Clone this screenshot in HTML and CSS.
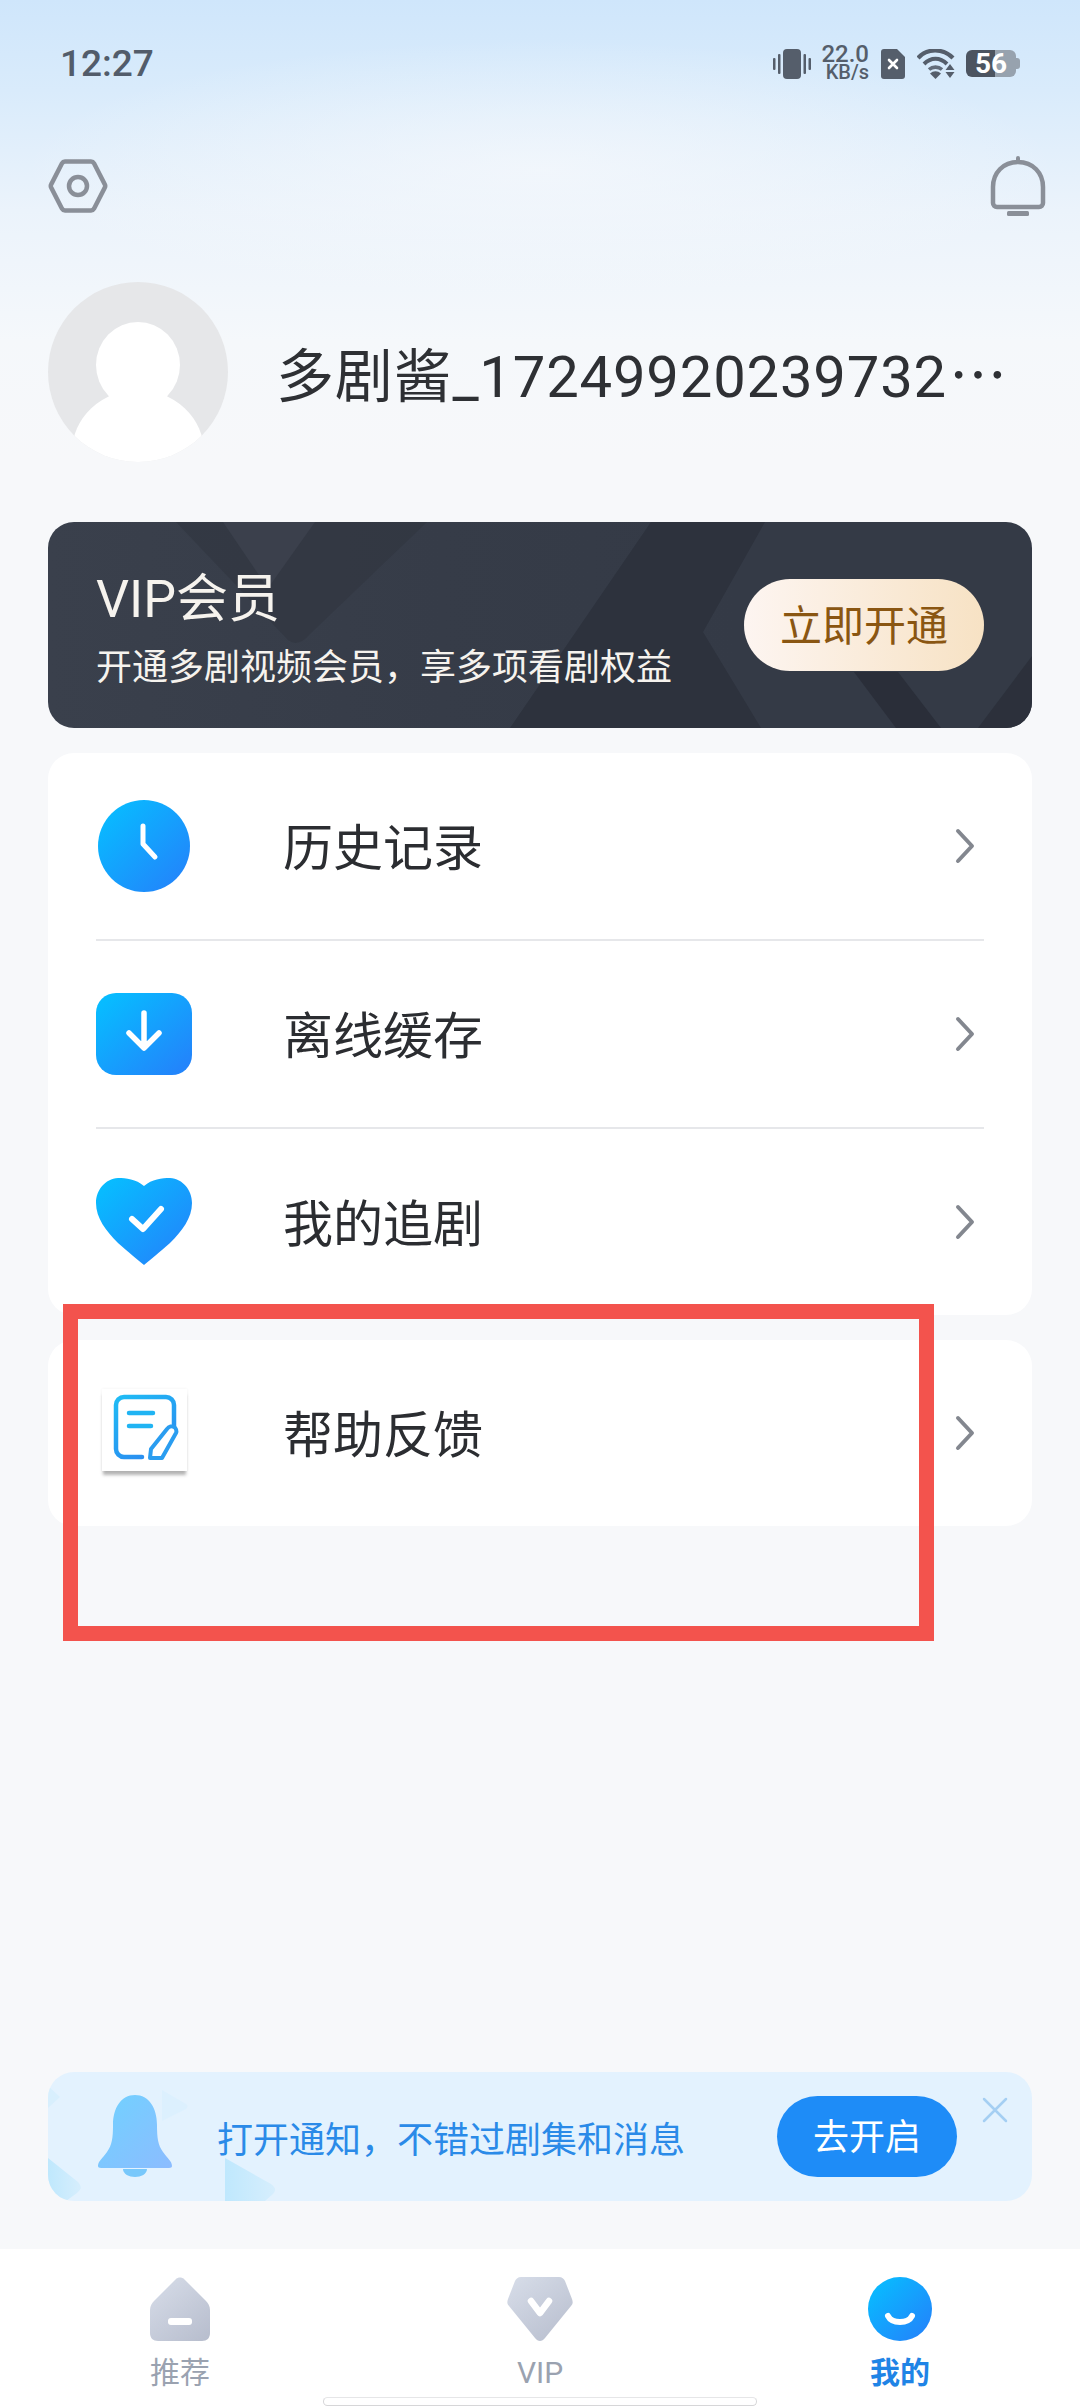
FILE: index.html
```html
<!DOCTYPE html>
<html lang="zh-CN">
<head>
    <meta charset="UTF-8">
    <meta name="viewport" content="width=device-width, initial-scale=1.0">
    <title>我的</title>
    <link rel="stylesheet" href="styles.css">
</head>
<body>
<svg class="defs" width="0" height="0">
    <defs>
        <linearGradient id="blue" x1="0.1" y1="0.1" x2="0.9" y2="0.9">
            <stop offset="0" stop-color="#08bbff"/>
            <stop offset="1" stop-color="#2285fb"/>
        </linearGradient>
        <linearGradient id="grey" x1="0.1" y1="0" x2="0.9" y2="1">
            <stop offset="0" stop-color="#d6dce8"/>
            <stop offset="1" stop-color="#b8bece"/>
        </linearGradient>
        <linearGradient id="bellfill" x1="0" y1="0" x2="1" y2="1">
            <stop offset="0" stop-color="#70d2ff"/>
            <stop offset="1" stop-color="#8cbcff"/>
        </linearGradient>
        <linearGradient id="pen" x1="0" y1="0" x2="0.6" y2="1">
            <stop offset="0" stop-color="#1fbcf5"/>
            <stop offset="1" stop-color="#2a8df0"/>
        </linearGradient>
        <linearGradient id="notice-shape" x1="0" y1="0" x2="1" y2="0">
            <stop offset="0" stop-color="#bfe8fd"/>
            <stop offset="1" stop-color="#d6eefd"/>
        </linearGradient>
    </defs>
</svg>

<div class="page">
    <!-- Status bar -->
    <div class="status-bar">
        <span class="time">12:27</span>
        <div class="status-icons">
            <svg class="ic-vibrate" width="38" height="30" viewBox="0 0 38 30">
                <rect x="10" y="0" width="18" height="30" rx="4" fill="#555e6b"/>
                <rect x="0" y="9" width="2.5" height="12" rx="1" fill="#555e6b"/>
                <rect x="5" y="5" width="2.5" height="20" rx="1" fill="#555e6b"/>
                <rect x="30.5" y="5" width="2.5" height="20" rx="1" fill="#555e6b"/>
                <rect x="35.5" y="9" width="2.5" height="12" rx="1" fill="#555e6b"/>
            </svg>
            <div class="net-speed">
                <span class="net-num">22.0</span>
                <span class="net-unit">KB/s</span>
            </div>
            <svg width="24" height="30" viewBox="0 0 24 30">
                <path d="M3 0h13l8 8v19a3 3 0 0 1-3 3H3a3 3 0 0 1-3-3V3a3 3 0 0 1 3-3z" fill="#555e6b"/>
                <path d="M8 11l8 8M16 11l-8 8" stroke="#fff" stroke-width="2.6" stroke-linecap="round"/>
            </svg>
            <svg width="38" height="30" viewBox="0 0 38 30">
                <path d="M1 9C10 -1 26 -1 36 9" fill="none" stroke="#555e6b" stroke-width="4.2"/>
                <path d="M7 15C14 8 23 8 30 15" fill="none" stroke="#555e6b" stroke-width="4"/>
                <path d="M12 20.5a10 10 0 0 1 13 0" fill="none" stroke="#555e6b" stroke-width="3.6" opacity="0.9"/>
                <path d="M13 24.5a8 8 0 0 1 11 0L18.500 30z" fill="#555e6b"/>
                <path d="M33 15l4.500 6h-9zM28.500 23h9L33 29z" fill="#555e6b"/>
            </svg>
            <div class="battery">
                <span class="battery-num">56</span>
                <span class="battery-cap"></span>
            </div>
        </div>
    </div>

    <!-- Top actions -->
    <div class="top-bar">
        <svg width="60" height="56" viewBox="0 0 60 56">
            <path d="M17 3.500h26a3.500 3.500 0 0 1 3 1.800l10.500 20.500a4 4 0 0 1 0 4.400L46 50.700a3.500 3.500 0 0 1-3 1.800H17a3.500 3.500 0 0 1-3-1.800L3.500 30.200a4 4 0 0 1 0-4.400L14 5.300a3.500 3.500 0 0 1 3-1.800z" fill="none" stroke="#8a8f98" stroke-width="4.500"/>
            <circle cx="30" cy="28" r="9" fill="none" stroke="#8a8f98" stroke-width="4.500"/>
        </svg>
        <svg width="56" height="62" viewBox="0 0 56 62">
            <path d="M28 7C13 7 3 18 3 32v16a4 4 0 0 0 4 4h42a4 4 0 0 0 4-4V32C53 18 43 7 28 7z" fill="none" stroke="#8a8f98" stroke-width="4.500"/>
            <rect x="26" y="1" width="4" height="7" rx="2" fill="#8a8f98"/>
            <rect x="17" y="56" width="22" height="5" rx="1.500" fill="#8a8f98"/>
        </svg>
    </div>

    <!-- Profile -->
    <div class="profile">
        <svg class="avatar" width="180" height="180" viewBox="0 0 180 180">
            <circle cx="90" cy="90" r="90" fill="#e6e7e9"/>
            <clipPath id="avatar-clip"><circle cx="90" cy="90" r="90"/></clipPath>
            <g clip-path="url(#avatar-clip)">
                <ellipse cx="90" cy="83" rx="42" ry="43" fill="#fff"/>
                <ellipse cx="90" cy="170" rx="66" ry="62" fill="#fff"/>
                <path d="M62 110h56l8 30H54z" fill="#fff"/>
            </g>
        </svg>
        <div class="nickname">多剧酱_17249920239732<span class="nickname-dots">…</span></div>
    </div>

    <!-- VIP card -->
    <div class="vip-card">
        <svg class="vip-bg" width="984" height="206" viewBox="0 0 984 206">
            <path d="M128 0L240 118Q250 126 262 112L379 0z" fill="#30353f" opacity="0.6"/>
            <path d="M175 0h92l-44 62q-3 4-6 0z" fill="#3b404c"/>
            <path d="M603 0L462 206H713L655 110 717 0z" fill="#2d323d"/>
            <path d="M806 150L848 206H893L850 150z" fill="#2a2e39"/>
            <path d="M984 134L930 206H984z" fill="#2c303b"/>
        </svg>
        <div class="vip-text">
            <div class="vip-title">VIP会员</div>
            <div class="vip-desc">开通多剧视频会员，享多项看剧权益</div>
        </div>
        <div class="vip-btn">立即开通</div>
    </div>

    <!-- Menu -->
    <div class="menu-card">
        <div class="menu-row">
            <div class="menu-icon">
                <svg width="96" height="96" viewBox="0 0 96 96">
                    <circle cx="48" cy="48" r="46" fill="url(#blue)"/>
                    <path d="M47 28v18l12 13" fill="none" stroke="#fff" stroke-width="5" stroke-linecap="round" stroke-linejoin="round"/>
                </svg>
            </div>
            <span class="menu-label">历史记录</span>
            <svg class="chevron" width="20" height="36" viewBox="0 0 20 36"><path d="M3 3l14 15L3 33" fill="none" stroke="#83878f" stroke-width="4" stroke-linecap="round" stroke-linejoin="round"/></svg>
        </div>
        <div class="divider"></div>
        <div class="menu-row">
            <div class="menu-icon">
                <svg width="96" height="82" viewBox="0 0 96 82">
                    <rect width="96" height="82" rx="20" fill="url(#blue)"/>
                    <path d="M48 20v34M33 40l15 15 15-15" fill="none" stroke="#fff" stroke-width="5.500" stroke-linecap="round" stroke-linejoin="round"/>
                </svg>
            </div>
            <span class="menu-label">离线缓存</span>
            <svg class="chevron" width="20" height="36" viewBox="0 0 20 36"><path d="M3 3l14 15L3 33" fill="none" stroke="#83878f" stroke-width="4" stroke-linecap="round" stroke-linejoin="round"/></svg>
        </div>
        <div class="divider"></div>
        <div class="menu-row">
            <div class="menu-icon">
                <svg width="96" height="88" viewBox="0 0 96 88">
                    <path d="M48 8C40 1 30 0 22 0 9 1 0 12 0 25c0 15 10 28 22 40 10 9 20 17 26 22 6-5 16-13 26-22 12-12 22-25 22-40C96 12 87 1 74 0c-8 0-18 1-26 8z" fill="url(#blue)"/>
                    <path d="M36 41l11 10 18-20" fill="none" stroke="#fff" stroke-width="6" stroke-linecap="round" stroke-linejoin="round"/>
                </svg>
            </div>
            <span class="menu-label">我的追剧</span>
            <svg class="chevron" width="20" height="36" viewBox="0 0 20 36"><path d="M3 3l14 15L3 33" fill="none" stroke="#83878f" stroke-width="4" stroke-linecap="round" stroke-linejoin="round"/></svg>
        </div>
    </div>

    <div class="menu-card">
        <div class="menu-row">
            <div class="menu-icon">
                <div class="help-tile">
                    <svg width="70" height="68" viewBox="0 0 70 68">
                        <path d="M29 63H11a8 8 0 0 1-8-8V11a8 8 0 0 1 8-8h42a8 8 0 0 1 8 8v23" fill="none" stroke="url(#pen)" stroke-width="4.500" stroke-linecap="round"/>
                        <path d="M16 19h24M16 32h22" stroke="#20b4f3" stroke-width="4.500" stroke-linecap="round"/>
                        <path d="M37 64l1-9 16-20c2-3 5-3 7-2s3 4 2 6L49 64z" fill="#fff" stroke="#2a9df0" stroke-width="4" stroke-linejoin="round"/>
                    </svg>
                </div>
            </div>
            <span class="menu-label">帮助反馈</span>
            <svg class="chevron" width="20" height="36" viewBox="0 0 20 36"><path d="M3 3l14 15L3 33" fill="none" stroke="#83878f" stroke-width="4" stroke-linecap="round" stroke-linejoin="round"/></svg>
        </div>
    </div>

    <!-- Notification prompt -->
    <div class="notice">
        <svg class="notice-bg" width="984" height="129" viewBox="0 0 984 129">
            <path d="M0 86l30 24q6 6-1 11L18 129H0z" fill="url(#notice-shape)"/>
            <path d="M177 86l46 26q7 5 2 10l-8 7h-40z" fill="url(#notice-shape)"/>
            <path d="M0 14l12 11-12 11z" fill="#d8effd"/>
            <path d="M114 18l24 14q3 2 0 5l-24 12z" fill="#dcf0fe"/>
        </svg>
        <svg class="notice-bell" width="76" height="82" viewBox="0 0 76 82">
            <path d="M38 0c-14 0-22 13-22 30 0 13-1 20-6 27-4 6-9 9-9 14 0 1 1 2 3 2h68c2 0 3-1 3-2 0-5-5-8-9-14-5-7-6-14-6-27C60 13 52 0 38 0z" fill="url(#bellfill)"/>
            <path d="M26 74h24c0 5-6 8-12 8s-12-3-12-8z" fill="#78c8fb"/>
        </svg>
        <span class="notice-text">打开通知，不错过剧集和消息</span>
        <div class="notice-btn">去开启</div>
        <svg class="notice-close" width="26" height="26" viewBox="0 0 26 26">
            <path d="M2 2l22 22M24 2L2 24" stroke="#a5cff3" stroke-width="2.500" stroke-linecap="round"/>
        </svg>
    </div>

    <!-- Bottom tabs -->
    <div class="tab-bar">
        <div class="tab">
            <svg width="60" height="64" viewBox="0 0 60 64">
                <path d="M26 2c2-2 6-2 8 0l22 22c2 2 4 5 4 9v23c0 5-3 8-8 8H8c-5 0-8-3-8-8V33c0-4 2-7 4-9z" fill="url(#grey)"/>
                <rect x="18" y="41" width="24" height="7" rx="3" fill="#fff"/>
            </svg>
            <span class="tab-label">推荐</span>
        </div>
        <div class="tab">
            <svg width="66" height="64" viewBox="0 0 66 64">
                <path d="M14 0h38c3 0 5 2 6 4l7 18c1 3 1 5-1 7L38 61c-3 4-7 4-10 0L2 29c-2-2-2-4-1-7L8 4c1-2 3-4 6-4z" fill="url(#grey)"/>
                <path d="M24 24l9 12 9-12" fill="none" stroke="#fff" stroke-width="6.500" stroke-linecap="round" stroke-linejoin="round"/>
            </svg>
            <span class="tab-label">VIP</span>
        </div>
        <div class="tab tab-active">
            <svg width="64" height="64" viewBox="0 0 64 64">
                <circle cx="32" cy="32" r="32" fill="url(#blue)"/>
                <path d="M20 39c4 8 20 8 24 0" fill="none" stroke="#fff" stroke-width="6" stroke-linecap="round"/>
            </svg>
            <span class="tab-label">我的</span>
        </div>
        <div class="home-bar"></div>
    </div>

    <!-- Red marker drawn on the screenshot -->
    <div class="marker"></div>
</div>
</body>
</html>
```

FILE: styles.css
```css
/* Global */
* {
    box-sizing: border-box;
}

body {
    margin: 0;
    font-family: "Roboto", "Noto Sans CJK SC", sans-serif;
    color: #2b2d31;
}

.defs {
    position: absolute;
}

.page {
    position: relative;
    width: 1080px;
    height: 2408px;
    overflow: hidden;
    display: flex;
    flex-direction: column;
    background-color: #f7f8fa;
    background-image:
        radial-gradient(ellipse 520px 130px at 50% 170px, rgba(245, 248, 252, 0.75), rgba(245, 248, 252, 0)),
        linear-gradient(180deg, #cfe6fb 0, #d9ebfb 90px, #ebf3fb 210px, #f5f8fb 340px, #f7f8fa 460px);
}

/* Status bar */
.status-bar {
    height: 124px;
    flex: none;
    padding: 0 60px;
    display: flex;
    align-items: center;
    justify-content: space-between;
}

.time {
    font-size: 37px;
    font-weight: 500;
    color: #525c6a;
    margin-top: 2px;
}

.status-icons {
    display: flex;
    align-items: center;
    gap: 12px;
    margin-top: 3px;
}

.ic-vibrate {
    margin-right: -4px;
}

.net-speed {
    display: flex;
    flex-direction: column;
    align-items: flex-end;
    width: 50px;
    color: #555e6b;
    font-weight: 500;
    margin-top: -3px;
}

.net-num {
    font-size: 24px;
    line-height: 20px;
    height: 20px;
}

.net-unit {
    font-size: 20px;
    line-height: 17px;
    height: 17px;
}

.battery {
    position: relative;
    width: 50px;
    height: 27px;
    border-radius: 6px;
    background: linear-gradient(90deg, #4c5460 0, #4c5460 58%, #97a2ae 58%, #97a2ae 100%);
    color: #fff;
    font-size: 28px;
    font-weight: 700;
    line-height: 27px;
    text-align: center;
    margin-right: 4px;
    margin-left: -1px;
}

.battery-cap {
    position: absolute;
    right: -4px;
    top: 8px;
    width: 4px;
    height: 11px;
    border-radius: 0 3px 3px 0;
    background: #97a2ae;
}

/* Top actions */
.top-bar {
    height: 124px;
    flex: none;
    padding: 0 34px 0 48px;
    display: flex;
    align-items: center;
    justify-content: space-between;
}

/* Profile */
.profile {
    margin-top: 34px;
    padding-left: 48px;
    height: 180px;
    flex: none;
    display: flex;
    align-items: center;
    gap: 48px;
}

.avatar {
    flex: none;
}

.nickname {
    font-size: 58px;
    line-height: 1;
    letter-spacing: 0.8px;
    white-space: nowrap;
    color: #2e3034;
    margin-top: 4px;
}

.nickname-dots {
    font-family: "Noto Sans CJK SC", sans-serif;
    letter-spacing: 0;
    margin-left: 2px;
}

/* VIP card */
.vip-card {
    position: relative;
    flex: none;
    margin: 60px 48px 0;
    height: 206px;
    padding: 0 48px;
    border-radius: 26px;
    overflow: hidden;
    display: flex;
    align-items: center;
    justify-content: space-between;
    background: linear-gradient(90deg, #3a404c 0, #363c48 40%, #343a46 70%, #343a46 100%);
}

.vip-bg {
    position: absolute;
    left: 0;
    top: 0;
}

.vip-text {
    position: relative;
    color: #f6f3ee;
}

.vip-title {
    font-size: 52px;
    line-height: 60px;
    margin-top: 11px;
}

.vip-desc {
    font-size: 36px;
    line-height: 46px;
    margin-top: 15px;
}

.vip-btn {
    position: relative;
    width: 240px;
    height: 92px;
    border-radius: 46px;
    background: linear-gradient(90deg, #fdf5f1 0, #f7e2c4 100%);
    color: #8a5612;
    font-size: 42px;
    line-height: 96px;
    text-align: center;
}

/* Menu */
.menu-card {
    flex: none;
    margin: 25px 48px 0;
    background: #fff;
    border-radius: 26px;
}

.menu-row {
    height: 186px;
    padding: 0 57px 0 48px;
    display: flex;
    align-items: center;
}

.menu-icon {
    width: 96px;
    flex: none;
    display: flex;
    justify-content: center;
    margin-right: 91px;
}

.menu-icon svg {
    display: block;
}

.menu-label {
    font-size: 50px;
    line-height: 1;
    color: #2b2d31;
    margin-top: 5px;
}

.chevron {
    margin-left: auto;
}

.divider {
    height: 2px;
    margin: 0 48px;
    background: #e6e7ea;
}

.help-tile {
    width: 85px;
    height: 82px;
    margin-bottom: 6px;
    background: #fff;
    box-shadow: 0 5px 3px -1px rgba(90, 90, 90, 0.45), 0 0 3px rgba(0, 0, 0, 0.06);
    padding: 5px 0 0 11px;
}

/* Notification prompt */
.notice {
    position: relative;
    flex: none;
    margin: auto 48px 48px;
    height: 129px;
    border-radius: 26px;
    overflow: hidden;
    background: #e3f2fe;
    display: flex;
    align-items: center;
    padding-left: 49px;
}

.notice-bg {
    position: absolute;
    left: 0;
    top: 0;
}

.notice-bell {
    position: relative;
    flex: none;
    margin-top: -2px;
}

.notice-text {
    position: relative;
    margin-left: 44px;
    font-size: 36px;
    color: #2a8ae8;
}

.notice-btn {
    position: absolute;
    left: 729px;
    top: 24px;
    width: 180px;
    height: 81px;
    border-radius: 41px;
    background: #1e8cf7;
    color: #fff;
    font-size: 36px;
    line-height: 84px;
    text-align: center;
}

.notice-close {
    position: absolute;
    right: 24px;
    top: 25px;
}

/* Bottom tabs */
.tab-bar {
    position: relative;
    flex: none;
    height: 159px;
    background: #fff;
    display: grid;
    grid-template-columns: repeat(3, 360px);
    padding-top: 28px;
}

.tab {
    display: flex;
    flex-direction: column;
    align-items: center;
}

.tab svg {
    display: block;
}

.tab-label {
    margin-top: 14px;
    font-size: 30px;
    line-height: 36px;
    color: #9aa2b0;
}

.tab-active .tab-label {
    color: #1f84e6;
    font-weight: 700;
}

.home-bar {
    position: absolute;
    left: 323px;
    top: 148px;
    width: 434px;
    height: 9px;
    border-radius: 5px;
    background: #fff;
    border: 1px solid #d6d6d8;
    border-top-color: #e6e6e8;
}

/* Overlay */
.marker {
    position: absolute;
    left: 63px;
    top: 1304px;
    width: 871px;
    height: 337px;
    border: 15px solid #f3534d;
}
```
